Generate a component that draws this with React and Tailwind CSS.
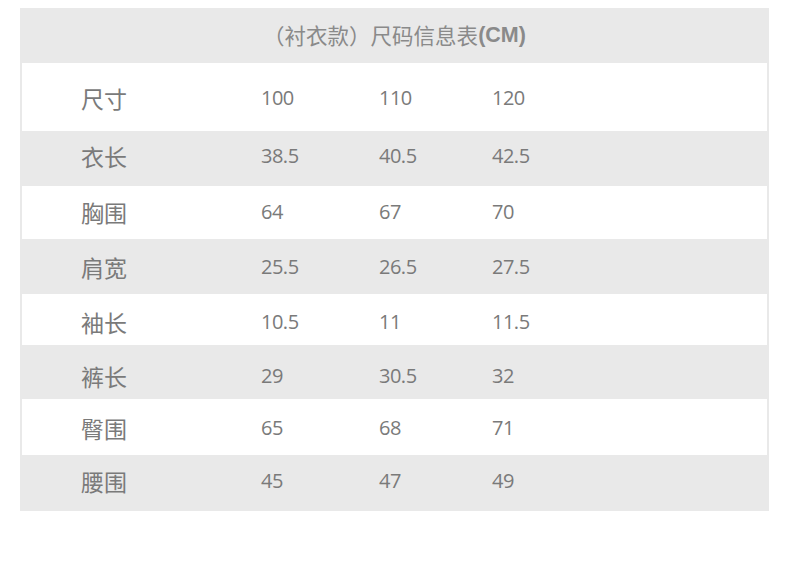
import React from "react";

const rows = [
  { label: "尺寸", v: ["100", "110", "120"], h: "h-[68px] pt-[2px]", bg: "bg-white" },
  { label: "衣长", v: ["38.5", "40.5", "42.5"], h: "h-[55px] pb-[6px]", bg: "" },
  { label: "胸围", v: ["64", "67", "70"], h: "h-[53px] pb-[2px]", bg: "bg-white" },
  { label: "肩宽", v: ["25.5", "26.5", "27.5"], h: "h-[55px]", bg: "" },
  { label: "袖长", v: ["10.5", "11", "11.5"], h: "h-[51px] pt-[4px]", bg: "bg-white" },
  { label: "裤长", v: ["29", "30.5", "32"], h: "h-[54px] pt-[8px]", bg: "" },
  { label: "臀围", v: ["65", "68", "71"], h: "h-[56px] pt-[2px]", bg: "bg-white" },
  { label: "腰围", v: ["45", "47", "49"], h: "h-[56px] pb-[4px]", bg: "" },
];

const cjk = "font-['Noto_Sans_CJK_SC',sans-serif]";
const num = "font-['Open_Sans','Noto_Sans_CJK_SC',sans-serif]";
const widths = ["w-[118px]", "w-[113px]", "w-[100px]"];

export default function App() {
  return (
    <div className="w-[790px] h-[588px] bg-white pt-[8px] pl-[20px]">
      <div className="w-[749px] bg-[#e9e9e9] px-[2px]">
        <div className={`h-[55px] flex items-center justify-center text-[21.5px] text-[#8a8a8a] ${cjk}`}>
          <span>（衬衣款）尺码信息表</span>
          <span className="font-['Liberation_Sans',sans-serif] font-bold">(CM)</span>
        </div>
        {rows.map((r) => (
          <div key={r.label} className={`${r.h} ${r.bg} flex items-center pl-[59px] text-[#7a7a7a]`}>
            <div className={`w-[180px] text-[23px] leading-[30px] ${cjk}`}>{r.label}</div>
            {r.v.map((x, i) => (
              <div key={i} className={`${widths[i]} text-[20px] leading-[30px] tracking-[-0.5px] ${num}`}>
                {x}
              </div>
            ))}
          </div>
        ))}
      </div>
    </div>
  );
}
